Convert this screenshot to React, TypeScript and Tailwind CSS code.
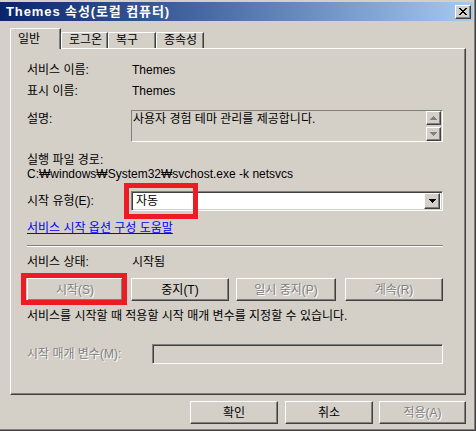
import React from 'react';

const raised =
  'border border-t-white border-l-white border-r-[#404040] border-b-[#404040] shadow-[inset_-1px_-1px_0_#808080] bg-[#d4d0c8]';
const sunken =
  'border border-t-[#808080] border-l-[#808080] border-r-white border-b-white shadow-[inset_1px_1px_0_#404040,inset_-1px_-1px_0_#d4d0c8]';
const disabledText = 'text-[#808080] [text-shadow:1px_1px_0_#fff]';

function CloseGlyph() {
  const rows = ['11000011', '01100110', '00111100', '00011000', '00111100', '01100110', '11000011'];
  return (
    <svg width="8" height="7" viewBox="0 0 8 7" shapeRendering="crispEdges">
      {rows.map((r, y) =>
        r.split('').map((c, x) => (c === '1' ? <rect key={`${x}-${y}`} x={x} y={y} width="1" height="1" fill="#000" /> : null))
      )}
    </svg>
  );
}

function Arrow({ dir, color }: { dir: 'up' | 'down'; color: string }) {
  return (
    <svg width="7" height="4" viewBox="0 0 7 4" shapeRendering="crispEdges">
      {dir === 'down' ? (
        <polygon points="0,0 7,0 3.5,4" fill={color} />
      ) : (
        <polygon points="0,4 7,4 3.5,0" fill={color} />
      )}
    </svg>
  );
}

function Tab({ label, active, width }: { label: string; active?: boolean; width: string }) {
  return (
    <div
      className={`${width} ${
        active ? 'h-[21px] -mb-[1px] z-10 pt-[3px]' : 'h-[16px] pt-[0px]'
      } pl-[7px] bg-[#d4d0c8] border-t border-l border-t-white border-l-white rounded-tl-[2px] border-r border-r-[#404040] shadow-[inset_-1px_0_0_#808080] text-[12px] leading-[14px] text-black`}
    >
      {label}
    </div>
  );
}

function Btn({ label, disabled, className }: { label: string; disabled?: boolean; className: string }) {
  return (
    <div className={`${raised} ${className} h-[23px] flex items-center justify-center text-[12px] font-normal ${disabled ? disabledText : 'text-black'}`}>
      <span>{label}</span>
    </div>
  );
}

export default function App() {
  return (
    <div className="w-[476px] h-[431px] bg-[#d4d0c8] overflow-hidden flex flex-col pt-[2px] shadow-[inset_-1px_-1px_0_#404040,inset_-2px_-2px_0_#808080] font-['Liberation_Sans','Noto_Sans_CJK_KR',sans-serif] select-none">
      {/* title bar */}
      <div className="mr-[3px] h-[19px] bg-linear-to-r from-[#0a246a] to-[#a6caf0] flex items-center justify-between pl-[6px] pr-[2px]">
        <span className="text-white font-bold text-[13px] leading-[15px] tracking-[0.9px]">Themes 속성(로컬 컴퓨터)</span>
        <div className={`${raised} w-[16px] h-[14px] flex items-center justify-center`}>
          <CloseGlyph />
        </div>
      </div>

      {/* tabs */}
      <div className="mt-[7px] ml-[10px] h-[20px] flex items-end relative">
        <Tab label="일반" active width="w-[51px]" />
        <Tab label="로그온" width="w-[47px]" />
        <Tab label="복구" width="w-[48px]" />
        <Tab label="종속성" width="w-[48px]" />
      </div>

      {/* panel */}
      <div className="ml-[10px] w-[456px] h-[347px] border border-t-white border-l-white border-r-[#404040] border-b-[#404040] shadow-[inset_-1px_-1px_0_#808080] pl-[16px] pr-[22px] text-[12px] text-black flex flex-col">
        <div className="mt-[13px] h-[16px] flex items-center">
          <span className="w-[105px]">서비스 이름:</span>
          <span>Themes</span>
        </div>
        <div className="mt-[5px] h-[16px] flex items-center">
          <span className="w-[105px]">표시 이름:</span>
          <span>Themes</span>
        </div>
        <div className="mt-[11px] h-[32px] flex">
          <span className="w-[104px] pt-[2px] leading-[14px]">설명:</span>
          <div className="flex-1 border border-t-[#808080] border-l-[#808080] border-r-white border-b-white flex justify-between pl-[1px]">
            <span className="pt-[1px] leading-[14px]">사용자 경험 테마 관리를 제공합니다.</span>
            <div className="flex flex-col justify-between pr-[1px]">
              <div className={`${raised} w-[15px] h-[14px] flex items-center justify-center`}>
                <Arrow dir="up" color="#808080" />
              </div>
              <div className={`${raised} w-[15px] h-[14px] flex items-center justify-center`}>
                <Arrow dir="down" color="#808080" />
              </div>
            </div>
          </div>
        </div>
        <div className="mt-[11px] h-[14px] flex items-center">실행 파일 경로:</div>
        <div className="h-[14px] flex items-center">C:₩windows₩System32₩svchost.exe -k netsvcs</div>
        <div className="mt-[10px] h-[20px] flex items-center">
          <span className="w-[104px]">시작 유형(E):</span>
          <div className={`${sunken} relative flex-1 h-[20px] bg-white flex items-center justify-between pl-[4px] pr-[2px]`}>
            <span>자동</span>
            <div className={`${raised} w-[16px] h-[16px] flex items-center justify-center`}>
              <Arrow dir="down" color="#000" />
            </div>
            <div className="absolute -left-[8px] -top-[9px] w-[74px] h-[36px] border-[5px] border-[#ed1c24]" />
          </div>
        </div>
        <div className="mt-[10px] h-[14px] flex items-center">
          <span className="text-[#0000ff] underline underline-offset-1">서비스 시작 옵션 구성 도움말</span>
        </div>
        <div className="mt-[10px] h-[2px] border-t border-t-[#808080] border-b border-b-white" />
        <div className="mt-[8px] h-[14px] flex items-center">
          <span className="w-[105px]">서비스 상태:</span>
          <span>시작됨</span>
        </div>
        <div className="mt-[9px] flex">
          <div className="relative">
            <Btn label="시작(S)" disabled className="w-[96px]" />
            <div className="absolute -left-[6px] -top-[5px] w-[106px] h-[32px] border-[5px] border-[#ed1c24]" />
          </div>
          <Btn label="중지(T)" className="ml-[8px] w-[98px]" />
          <Btn label="일시 중지(P)" disabled className="ml-[7px] w-[100px]" />
          <Btn label="계속(R)" disabled className="ml-[9px] w-[98px]" />
        </div>
        <div className="mt-[8px] h-[14px] flex items-center">서비스를 시작할 때 적용할 시작 매개 변수를 지정할 수 있습니다.</div>
        <div className="mt-[21px] h-[20px] flex items-center">
          <span className={`w-[125px] ${disabledText}`}>시작 매개 변수(M):</span>
          <div className={`${sunken} flex-1 h-[20px] bg-[#d4d0c8]`} />
        </div>
      </div>

      {/* dialog buttons */}
      <div className="mt-[6px] mr-[10px] flex justify-end">
        <Btn label="확인" className="w-[88px]" />
        <Btn label="취소" className="ml-[7px] w-[88px]" />
        <Btn label="적용(A)" disabled className="ml-[6px] w-[87px]" />
      </div>
    </div>
  );
}
